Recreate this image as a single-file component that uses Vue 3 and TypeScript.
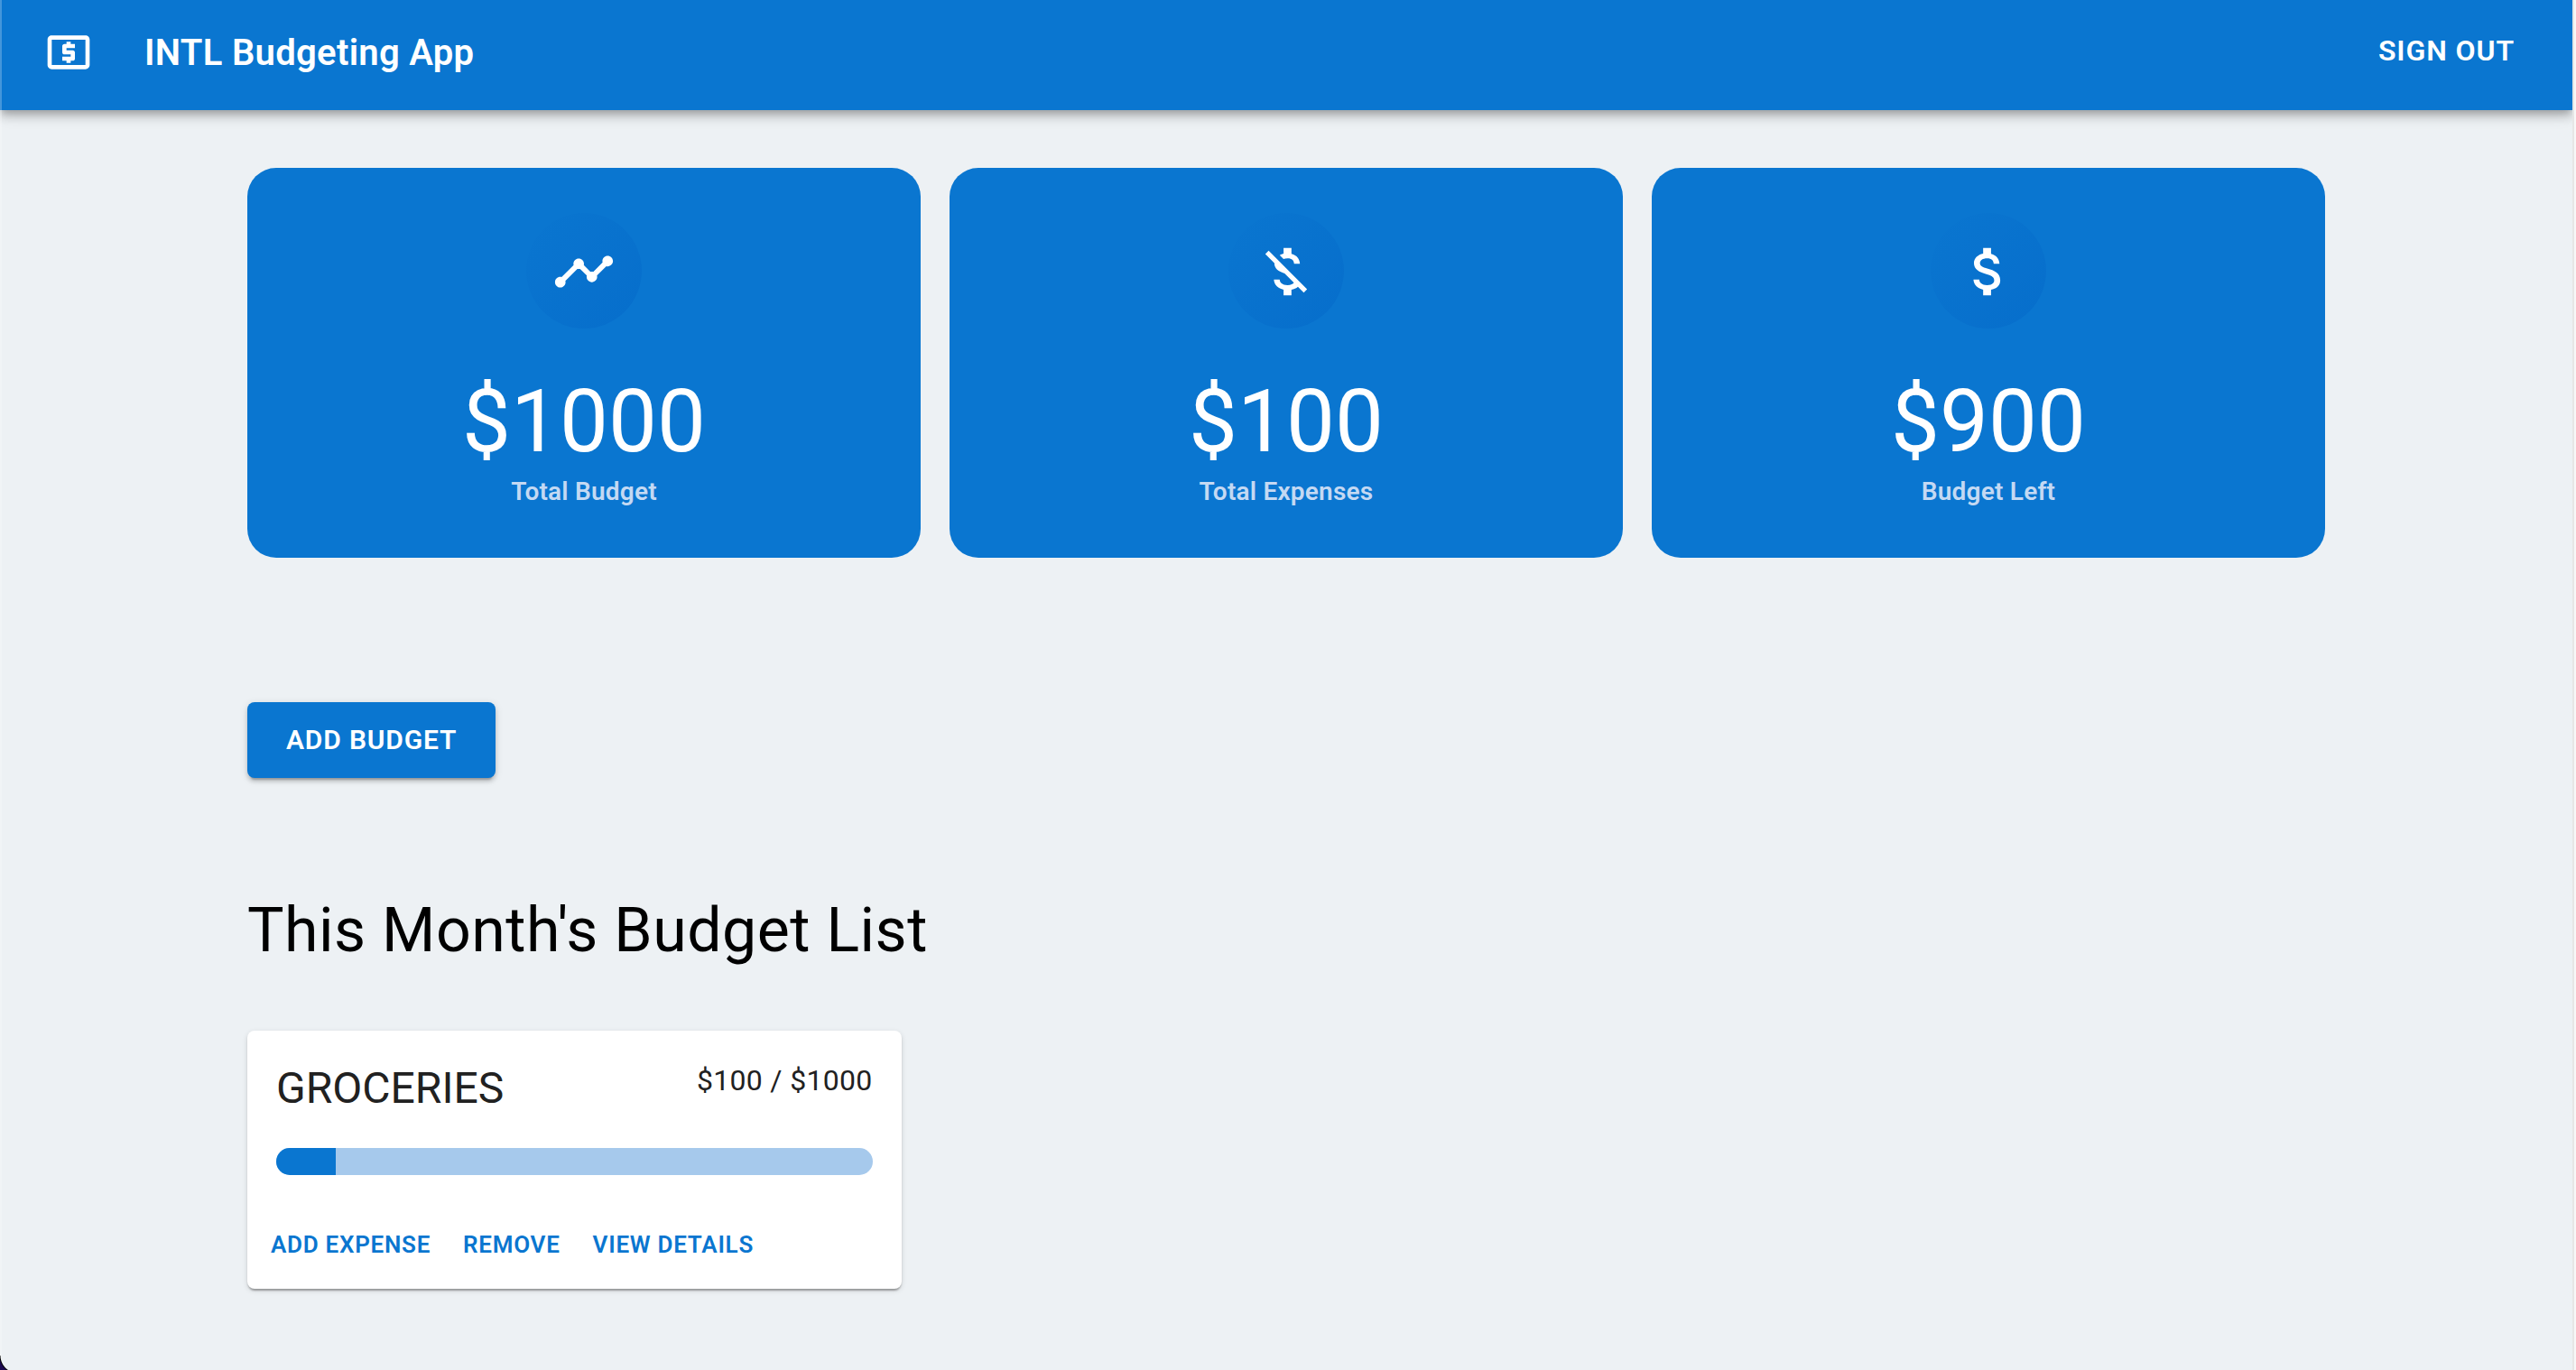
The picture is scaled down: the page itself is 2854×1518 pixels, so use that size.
<script setup lang="ts">
interface Stat {
  label: string
  amount: number
  icon: string
}

interface Budget {
  name: string
  spent: number
  total: number
}

const stats: Stat[] = [
  {
    label: 'Total Budget',
    amount: 1000,
    icon: 'M23 8c0 1.1-.9 2-2 2-.18 0-.35-.02-.51-.07l-3.56 3.55c.05.16.07.34.07.52 0 1.1-.9 2-2 2s-2-.9-2-2c0-.18.02-.36.07-.52l-2.55-2.55c-.16.05-.34.07-.52.07s-.36-.02-.52-.07l-4.55 4.56c.05.16.07.33.07.51 0 1.1-.9 2-2 2s-2-.9-2-2 .9-2 2-2c.18 0 .35.02.51.07l4.56-4.55C8.02 9.36 8 9.18 8 9c0-1.1.9-2 2-2s2 .9 2 2c0 .18-.02.36-.07.52l2.55 2.55c.16-.05.34-.07.52-.07s.36.02.52.07l3.55-3.56C19.02 8.35 19 8.18 19 8c0-1.1.9-2 2-2s2 .9 2 2z',
  },
  {
    label: 'Total Expenses',
    amount: 100,
    icon: 'M12.5 6.9c1.78 0 2.44.85 2.5 2.1h2.21c-.07-1.72-1.12-3.3-3.21-3.81V3h-3v2.16c-.53.12-1.03.3-1.48.54l1.47 1.47c.41-.17.91-.27 1.51-.27zM5.33 4.06L4.06 5.33 7.5 8.77c0 2.08 1.56 3.21 3.91 3.91l3.51 3.51c-.34.48-1.05.91-2.42.91-2.06 0-2.87-.92-2.98-2.1h-2.2c.12 2.19 1.76 3.42 3.68 3.83V21h3v-2.15c.96-.18 1.82-.55 2.45-1.12l2.22 2.22 1.27-1.27L5.33 4.06z',
  },
  {
    label: 'Budget Left',
    amount: 900,
    icon: 'M11.8 10.9c-2.27-.59-3-1.2-3-2.15 0-1.09 1.01-1.85 2.7-1.85 1.78 0 2.44.85 2.5 2.1h2.21c-.07-1.72-1.12-3.3-3.21-3.81V3h-3v2.16c-1.94.42-3.5 1.68-3.5 3.61 0 2.31 1.91 3.46 4.7 4.13 2.5.6 3 1.48 3 2.41 0 .69-.49 1.79-2.7 1.79-2.06 0-2.87-.92-2.98-2.1h-2.2c.12 2.19 1.76 3.42 3.68 3.83V21h3v-2.15c1.95-.37 3.5-1.5 3.5-3.55 0-2.84-2.43-3.81-4.7-4.4z',
  },
]

const budgets: Budget[] = [{ name: 'GROCERIES', spent: 100, total: 1000 }]

const percent = (b: Budget): number => (b.spent / b.total) * 100
</script>

<template>
  <div class="page">
    <header class="app-bar">
      <svg class="logo" viewBox="0 0 24 24" aria-hidden="true">
        <path d="M11 17h2v-1h1c.55 0 1-.45 1-1v-3c0-.55-.45-1-1-1h-3v-1h4V8h-2V7h-2v1h-1c-.55 0-1 .45-1 1v3c0 .55.45 1 1 1h3v1H9v2h2v1zm9-13H4c-1.11 0-1.99.89-1.99 2L2 18c0 1.11.89 2 2 2h16c1.11 0 2-.89 2-2V6c0-1.11-.89-2-2-2zm0 14H4V6h16v12z" />
      </svg>
      <div class="brand">INTL Budgeting App</div>
      <button type="button" class="sign-out">SIGN OUT</button>
    </header>

    <main class="container">
      <section class="stats">
        <article v-for="stat in stats" :key="stat.label" class="stat">
          <div class="stat-icon">
            <svg viewBox="0 0 24 24" aria-hidden="true"><path :d="stat.icon" /></svg>
          </div>
          <div class="stat-amount">${{ stat.amount }}</div>
          <div class="stat-label">{{ stat.label }}</div>
        </article>
      </section>

      <button type="button" class="add-budget">ADD BUDGET</button>

      <h1 class="list-title">This Month's Budget List</h1>

      <section class="budgets">
        <article v-for="budget in budgets" :key="budget.name" class="budget">
          <div class="budget-content">
            <div class="budget-head">
              <h2 class="budget-name">{{ budget.name }}</h2>
              <div class="budget-sum">${{ budget.spent }} / ${{ budget.total }}</div>
            </div>
            <div
              class="track"
              role="progressbar"
              :aria-label="budget.name"
              :aria-valuenow="percent(budget)"
              aria-valuemin="0"
              aria-valuemax="100"
            >
              <div class="fill" :style="{ width: percent(budget) + '%' }"></div>
            </div>
          </div>
          <div class="budget-actions">
            <button type="button">ADD EXPENSE</button>
            <button type="button">REMOVE</button>
            <button type="button">VIEW DETAILS</button>
          </div>
        </article>
      </section>
    </main>
  </div>
</template>

<style>
body {
  margin: 0;
  background: #f8f8f8;
}
</style>

<style scoped>
.page {
  position: relative;
  box-sizing: border-box;
  min-height: 100vh;
  margin-right: 2px;
  border-right: 2px solid #e6e6e6;
  background: #edf1f4;
  color: #212121;
  font-family: Roboto, "Liberation Sans", sans-serif;
  overflow: hidden;
}

/* light window edge on the left */
.page::before {
  content: "";
  position: absolute;
  inset: 0 auto 0 0;
  z-index: 1;
  width: 2px;
  background: rgba(255, 255, 255, 0.24);
}

/* rounded window corner */
.page::after {
  content: "";
  position: absolute;
  bottom: 0;
  left: 0;
  z-index: 2;
  width: 10px;
  height: 16px;
  background: radial-gradient(circle at 20px 0, transparent 19px, #000 20px, #1c0a50 21px);
}

button {
  margin: 0;
  border: 0;
  background: none;
  font-family: inherit;
  font-weight: 600;
  letter-spacing: 0.028em;
  cursor: pointer;
}

.app-bar {
  display: flex;
  align-items: center;
  padding: 2px 48px 8px;
  background: #0a76d0;
  color: #fff;
  box-shadow: 0 4px 8px -2px rgba(0, 0, 0, 0.2), 0 8px 10px rgba(0, 0, 0, 0.14), 0 2px 20px rgba(0, 0, 0, 0.12);
}

.logo {
  width: 56px;
  height: 56px;
  margin-right: 56px;
  fill: currentColor;
}

.brand {
  flex: 1;
  padding-top: 2px;
  font-size: 40px;
  font-weight: 600;
  letter-spacing: 0.0075em;
  line-height: 64px;
}

.sign-out {
  padding: 26px 16px 30px;
  color: inherit;
  font-size: 32px;
  line-height: 56px;
}

.container {
  box-sizing: border-box;
  max-width: 2398px;
  margin: 0 auto;
  padding: 64px 48px;
}

.stats {
  display: grid;
  grid-template-columns: repeat(3, 1fr);
  gap: 32px;
}

.stat {
  display: flex;
  flex-direction: column;
  align-items: center;
  padding: 50px 0 51px;
  border-radius: 32px;
  background: #0a76d0;
  color: #fff;
}

.stat-icon {
  box-sizing: border-box;
  display: flex;
  align-items: center;
  justify-content: center;
  width: 128px;
  height: 128px;
  margin-bottom: 47px;
  padding-top: 2px;
  border-radius: 50%;
  background: linear-gradient(135deg, rgba(0, 96, 196, 0), rgba(0, 96, 196, 0.36));
}

.stat-icon svg {
  width: 70px;
  height: 70px;
  fill: currentColor;
}

.stat-amount {
  font-size: 96px;
  line-height: 112px;
}

.stat-label {
  color: #c4d9f3;
  font-size: 28px;
  font-weight: 600;
  letter-spacing: 0.0075em;
  line-height: 44px;
}

.add-budget {
  display: block;
  margin-top: 160px;
  padding: 16px 43px;
  border-radius: 8px;
  background: #0a76d0;
  color: #fff;
  font-size: 30px;
  line-height: 52px;
  box-shadow: 0 6px 2px -4px rgba(0, 0, 0, 0.2), 0 4px 4px rgba(0, 0, 0, 0.14), 0 2px 10px rgba(0, 0, 0, 0.12);
}

.list-title {
  margin: 127px 0 69px;
  color: #000;
  font-size: 68px;
  font-weight: 400;
  letter-spacing: 0.0075em;
  line-height: 84px;
}

.budgets {
  display: grid;
  grid-template-columns: repeat(3, 1fr);
  gap: 64px;
}

.budget {
  border-radius: 8px;
  background: #fff;
  box-shadow: 0 4px 2px -2px rgba(0, 0, 0, 0.2), 0 2px 2px rgba(0, 0, 0, 0.14), 0 2px 6px rgba(0, 0, 0, 0.12);
}

.budget-content {
  padding: 32px;
}

.budget-head {
  display: flex;
  align-items: flex-start;
  justify-content: space-between;
  margin-bottom: 34px;
}

.budget-name {
  margin: 0;
  font-size: 48px;
  font-weight: 400;
  line-height: 64px;
}

.budget-sum {
  font-size: 32px;
  letter-spacing: 0.01em;
  line-height: 46px;
}

.track {
  height: 30px;
  border-radius: 16px;
  background: #a6c9ec;
  overflow: hidden;
}

.fill {
  height: 100%;
  background: #0a76d0;
}

.budget-actions {
  display: flex;
  gap: 16px;
  padding: 14px 16px 18px;
}

.budget-actions button {
  padding: 8px 10px;
  color: #0a76d0;
  font-size: 26px;
  line-height: 46px;
}
</style>
